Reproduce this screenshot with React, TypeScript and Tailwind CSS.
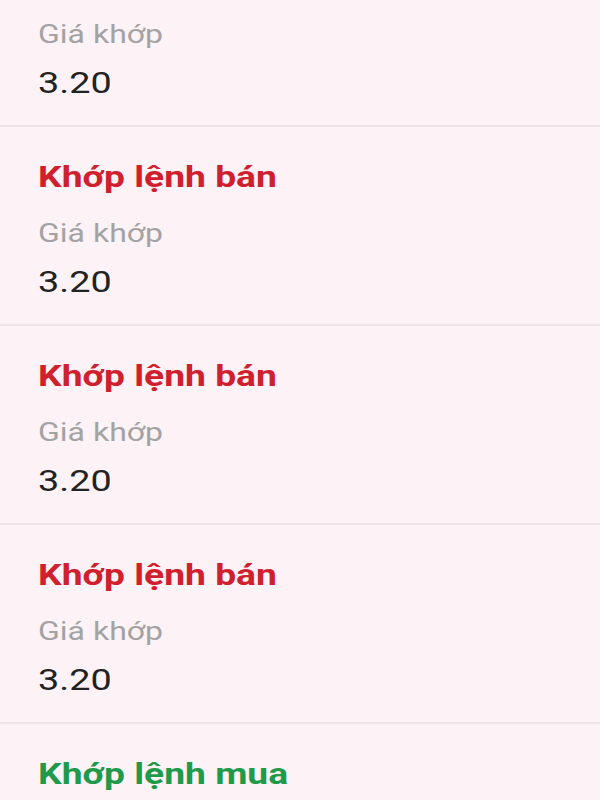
const trades = [
  { side: 'sell', price: '3.20' },
  { side: 'sell', price: '3.20' },
  { side: 'sell', price: '3.20' },
  { side: 'sell', price: '3.20' },
  { side: 'buy', price: '3.20' },
]

export default function App() {
  return (
    <div className="h-[800px] w-[600px] overflow-hidden bg-[#fdf3f6] font-['Roboto',sans-serif]">
      <div className="-mt-[72px]">
        {trades.map((t, i) => (
          <div key={i} className="border-b-2 border-[#ede5e8] pl-[38px] pt-[30px] pb-[22px]">
            <div
              className={
                'origin-left scale-x-[1.24] text-[30px] font-bold leading-[40px] ' +
                (t.side === 'sell' ? 'text-[#d0202e]' : 'text-[#1f9a4a]')
              }
            >
              {t.side === 'sell' ? 'Khớp lệnh bán' : 'Khớp lệnh mua'}
            </div>
            <div className="mt-[19px] origin-left scale-x-[1.28] text-[25px] leading-[36px] text-[#a3a3a3]">Giá khớp</div>
            <div className="mt-[10px] origin-left scale-x-[1.26] text-[30px] leading-[40px] text-[#222222]">{t.price}</div>
          </div>
        ))}
      </div>
    </div>
  )
}
